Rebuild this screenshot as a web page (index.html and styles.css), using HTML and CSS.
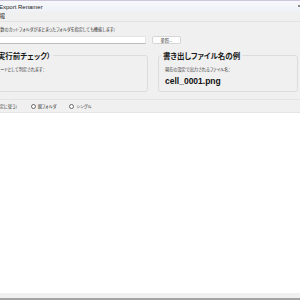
FILE: index.html
```html
<!DOCTYPE html>
<html lang="ja">
  <head>
    <meta charset="UTF-8" />
    <title>Export Renamer</title>
    <link rel="stylesheet" href="styles.css">
  </head>
  <body>
    <div class="window">
      <div class="titlebar">
        <span class="title">Export Renamer</span>
        <span class="min-btn"></span>
      </div>

      <!-- Dossier d'entrée -->
      <div class="section-head">入力フォルダ情報</div>
      <div class="hint">（複数のカットフォルダがまとまったフォルダを指定しても機能します）</div>
      <div class="path-row">
        <div class="path-input"></div>
        <button class="browse-btn">参照...</button>
      </div>

      <div class="boxes">
        <fieldset class="box">
          <legend>判定（実行前チェック）</legend>
          <p class="box-text">シングルモードとして判定されます：</p>
        </fieldset>
        <fieldset class="box">
          <legend>書き出しファイル名の例</legend>
          <p class="box-text">現在の設定で出力されるファイル名：</p>
          <p class="example-name">cell_0001.png</p>
        </fieldset>
      </div>

      <div class="radio-row">
        <span class="radio-label">自動（設定に従う）</span>
        <span class="radio"></span><span class="radio-label">親フォルダ</span>
        <span class="radio"></span><span class="radio-label">シングル</span>
      </div>

      <div class="file-list"></div>
      <div class="footer"></div>
    </div>
  </body>
</html>
```

FILE: styles.css
```css
/* Base */
html,
body {
  margin: 0;
  padding: 0;
  width: 100%;
  height: 100%;
  overflow: hidden;
  background-color: #f0f0f0;
  font-family: "Noto Sans CJK JP", "Liberation Sans", sans-serif;
  font-feature-settings: "palt";
  color: #333;
}

/* la fenêtre est coupée à gauche */
.window {
  margin-left: -40px;
  width: 340px;
  height: 300px;
  display: flex;
  flex-direction: column;
}

.titlebar {
  height: 12px;
  display: flex;
  align-items: center;
  justify-content: space-between;
  padding-left: 39px;
  background: linear-gradient(#f6f8fb, #eef1f6);
  border-top: 1px solid #cfc6dc;
  box-sizing: border-box;
}

.title {
  font-family: "Liberation Sans", sans-serif;
  font-size: 6px;
  color: #222;
}

.min-btn {
  width: 2px;
  height: 2px;
  background-color: #888;
  margin-bottom: 2px;
}

.section-head {
  height: 9px;
  line-height: 9px;
  padding-left: 4px;
  font-size: 5.5px;
  color: #222;
  border-bottom: 1px solid #e2e2e2;
}

.hint {
  margin-top: 4px;
  padding-left: 34px;
  height: 6px;
  line-height: 6px;
  font-size: 4.2px;
  white-space: nowrap;
}

.path-row {
  display: flex;
  gap: 6px;
  margin-top: 4px;
  padding-left: 6px;
}

.path-input {
  width: 180px;
  height: 8px;
  background-color: #fff;
  border: 1px solid #e4e4e4;
  border-bottom-color: #bdbdbd;
  box-sizing: border-box;
}

.browse-btn {
  width: 29px;
  height: 8px;
  padding: 0;
  font-family: inherit;
  font-size: 4.2px;
  line-height: 6px;
  color: #333;
  background-color: #fdfdfd;
  border: 1px solid #d6d6d6;
  border-radius: 2px;
}

/* Groupes */
.boxes {
  display: grid;
  grid-template-columns: 174px 1fr;
  gap: 10px;
  margin-top: 7px;
  padding: 0 2px 0 14px;
}

.box {
  margin: 0;
  min-width: 0;
  padding: 6px 6px 5px 6px;
  border: 1px solid #dcdcdc;
  border-radius: 3px;
}

.box legend {
  margin-left: -4px;
  padding: 0 2px;
  font-size: 7.5px;
  line-height: 9px;
  font-weight: bold;
  color: #1a1a1a;
  white-space: nowrap;
}

.box-text {
  margin: 0;
  font-size: 4.2px;
  line-height: 6px;
  white-space: nowrap;
}

.example-name {
  margin: 4px 0 0;
  font-family: "Liberation Sans", sans-serif;
  font-size: 8.5px;
  line-height: 10px;
  font-weight: bold;
  color: #111;
}

/* Options */
.radio-row {
  display: flex;
  align-items: center;
  height: 12px;
  margin-top: 7px;
  padding-left: 25px;
  border-top: 1px solid #e4e4e4;
  border-bottom: 1px solid #e4e4e4;
  font-size: 4.2px;
}

.radio-label {
  margin-right: 13px;
  white-space: nowrap;
}

.radio {
  width: 5px;
  height: 5px;
  margin-right: 2px;
  border: 1px solid #666;
  border-radius: 50%;
  background-color: #fff;
  box-sizing: border-box;
}

.file-list {
  flex: 1;
  background-color: #fff;
}

.footer {
  height: 5px;
  background-color: #f0f0f0;
  border-bottom: 2px solid #a3a3a3;
}
```
